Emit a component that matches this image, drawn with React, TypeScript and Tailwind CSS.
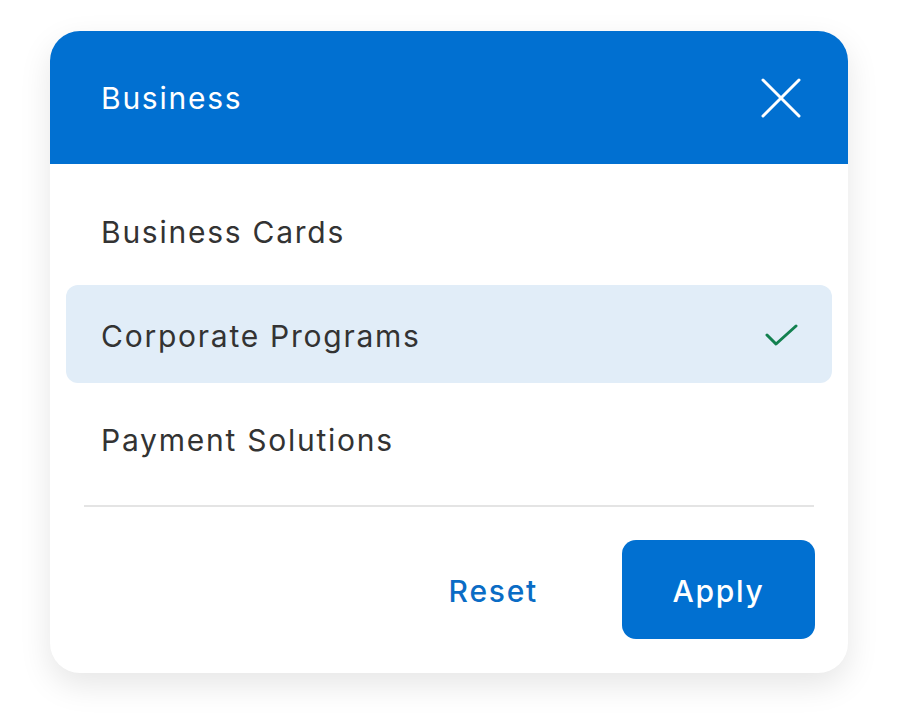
import React, { useState } from "react";

const items = ["Business Cards", "Corporate Programs", "Payment Solutions"];

function CloseIcon() {
  return (
    <svg width="40" height="40" viewBox="0 0 40 40" fill="none" aria-hidden>
      <path d="M2 2L38 38M38 2L2 38" stroke="white" strokeWidth="3" strokeLinecap="round" />
    </svg>
  );
}

function CheckIcon() {
  return (
    <svg width="34" height="26" viewBox="0 0 34 26" fill="none" aria-hidden>
      <path d="M2 12L11 21L31 3" stroke="#12804f" strokeWidth="3" strokeLinecap="round" strokeLinejoin="round" />
    </svg>
  );
}

export default function App() {
  const [selected, setSelected] = useState("Corporate Programs");

  return (
    <div className="min-h-screen bg-white pt-[31px] pl-[50px] font-['Inter','Noto_Sans',sans-serif] tracking-[1.75px]">
      <div className="w-[798px] h-[642px] rounded-[30px] bg-white overflow-hidden shadow-[0_12px_32px_rgba(0,0,0,0.10)] flex flex-col">
        {/* header */}
        <div className="h-[133px] bg-[#0170d1] flex items-center justify-between pl-[51px] pr-[47px] shrink-0">
          <h2 className="text-[30px] text-white leading-none">Business</h2>
          <button className="text-white">
            <CloseIcon />
          </button>
        </div>

        {/* options */}
        <div className="flex flex-col gap-[6px] px-4 pt-[17px]">
          {items.map((label) => {
            const active = label === selected;
            return (
              <button
                key={label}
                onClick={() => setSelected(label)}
                className={
                  "h-[98px] rounded-[12px] flex items-center justify-between pl-[35px] pr-[33px] pt-[3px] text-left " +
                  (active ? "bg-[#e1edf8]" : "bg-transparent")
                }
              >
                <span className="text-[30px] text-[#333333] leading-none">{label}</span>
                {active && <CheckIcon />}
              </button>
            );
          })}
        </div>

        <div className="mx-[34px] mt-[18px] h-[2px] bg-[#e4e4e4]" />

        {/* footer */}
        <div className="flex items-center justify-end gap-[84px] pr-[33px] pt-[33px]">
          <button className="text-[30px] text-[#0a6cc5] font-medium leading-none pt-[2px]">Reset</button>
          <button className="w-[193px] h-[99px] rounded-[14px] bg-[#0170d1] text-white text-[30px] font-medium leading-none pt-[2px]">
            Apply
          </button>
        </div>
      </div>
    </div>
  );
}
